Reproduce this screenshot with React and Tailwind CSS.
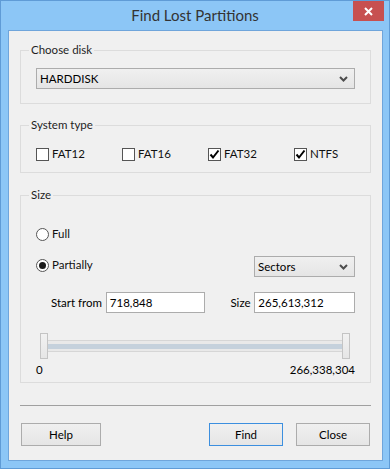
import { useState } from 'react';

const font = "font-['Lato',sans-serif]";

function Chevron() {
  return (
    <svg width="9" height="6" viewBox="0 0 9 6" className="shrink-0">
      <path d="M1 1 L4.5 4.5 L8 1" fill="none" stroke="#4d4d4d" strokeWidth="2" />
    </svg>
  );
}

function Select({ value, className }) {
  return (
    <div
      className={`flex h-[21px] items-center justify-between border border-[#acacac] bg-gradient-to-b from-[#f0f0f0] to-[#e5e5e5] pl-[3px] pr-[6px] text-[11.5px] text-black ${className}`}
    >
      <span>{value}</span>
      <Chevron />
    </div>
  );
}

function Checkbox({ label, checked, onChange, last }) {
  return (
    <label className={`flex h-[16px] cursor-default items-center ${last ? '' : 'w-[86px]'}`} onClick={onChange}>
      <span className="flex h-[13px] w-[13px] items-center justify-center border border-[#555] bg-white">
        {checked && (
          <svg width="11" height="11" viewBox="0 0 11 11">
            <path d="M1.5 5.5 L4 8.5 L9.5 1.5" fill="none" stroke="#000" strokeWidth="2" />
          </svg>
        )}
      </span>
      <span className="ml-[3px] text-[11.5px] text-[#111]">{label}</span>
    </label>
  );
}

function Radio({ label, checked, onClick }) {
  return (
    <div className="flex h-[16px] cursor-default items-center" onClick={onClick}>
      <span className="flex h-[13px] w-[13px] items-center justify-center rounded-full border border-[#555] bg-white">
        {checked && <span className="h-[7px] w-[7px] rounded-full bg-[#1a1a1a]" />}
      </span>
      <span className="ml-[3px] text-[11.5px] text-[#111]">{label}</span>
    </div>
  );
}

function GroupBox({ title, className, children }) {
  return (
    <fieldset className={`w-[351px] min-w-0 border border-[#dcdcdc] px-[15px] ${className}`}>
      <legend className="-ml-[7px] px-[2px] text-[11.5px] leading-[14px] text-[#1e1e1e]">{title}</legend>
      {children}
    </fieldset>
  );
}

function Button({ children, primary, width }) {
  return (
    <button
      className={`h-[23px] border bg-gradient-to-b from-[#f0f0f0] to-[#e5e5e5] text-[11.5px] leading-[21px] text-black ${width} ${
        primary ? 'border-[#3c8fdf]' : 'border-[#acacac]'
      }`}
    >
      {children}
    </button>
  );
}

function SliderThumb() {
  return <div className="h-[26px] w-[8px] shrink-0 border border-[#c4c4c4] bg-gradient-to-b from-[#f2f2f2] to-[#e6e6e6]" />;
}

export default function App() {
  const [types, setTypes] = useState({ FAT12: false, FAT16: false, FAT32: true, NTFS: true });
  const [mode, setMode] = useState('partial');

  const toggle = (k) => setTypes((prev) => ({ ...prev, [k]: !prev[k] }));

  return (
    <div className={`flex h-[469px] w-[390px] flex-col border border-[#5f9bd6] bg-[#8cc6f6] ${font}`}>
      {/* Title bar */}
      <div className="relative flex h-[29px] shrink-0 items-center justify-center">
        <span className="text-[15px] text-[#333]">Find Lost Partitions</span>
        <div className="absolute right-[5px] top-0 flex h-[20px] w-[31px] items-center justify-center bg-[#c75050]">
          <svg width="9" height="9" viewBox="0 0 9 9">
            <path d="M1 1 L8 8 M8 1 L1 8" stroke="#fff" strokeWidth="2" />
          </svg>
        </div>
      </div>

      {/* Client area */}
      <div className="mb-[7px] ml-[7px] mr-[6px] flex flex-1 flex-col border border-[#6fa5db] bg-[#f0f0f0] pl-[11px]">
        <GroupBox title="Choose disk" className="mt-[12px] pb-[14px]">
          <Select value="HARDDISK" className="mt-[11px] w-[319px]" />
        </GroupBox>

        <GroupBox title="System type" className="mt-[14px] pb-[10px]">
          <div className="mt-[14px] flex">
            {['FAT12', 'FAT16', 'FAT32', 'NTFS'].map((k, i) => (
              <Checkbox key={k} label={k} checked={types[k]} last={i === 3} onChange={() => toggle(k)} />
            ))}
          </div>
        </GroupBox>

        <GroupBox title="Size" className="mt-[15px] pb-[5px]">
          <div className="mt-[24px]">
            <Radio label="Full" checked={mode === 'full'} onClick={() => setMode('full')} />
          </div>
          <div className="mt-[14px] flex items-start justify-between">
            <div className="mt-[1px]">
              <Radio label="Partially" checked={mode === 'partial'} onClick={() => setMode('partial')} />
            </div>
            <Select value="Sectors" className="w-[101px]" />
          </div>
          <div className="mt-[15px] flex items-center text-[11.5px] text-black">
            <span className="ml-[15px] w-[55px]">Start from</span>
            <div className="flex h-[21px] w-[100px] items-center border border-[#acacac] bg-white pl-[3px]">718,848</div>
            <span className="ml-[25px] w-[24px]">Size</span>
            <div className="flex h-[21px] w-[101px] items-center border border-[#acacac] bg-white pl-[3px]">265,613,312</div>
          </div>
          <div className="mt-[20px] flex items-center pl-[4px] pr-[5px]">
            <SliderThumb />
            <div className="flex h-[12px] flex-1 items-center border-y border-[#d6d6d6] bg-[#e9e9e9]">
              <div className="h-[5px] w-full bg-[#c5d1dc]" />
            </div>
            <SliderThumb />
          </div>
          <div className="mt-[4px] flex justify-between text-[11.5px] leading-[14px] text-black">
            <span>0</span>
            <span>266,338,304</span>
          </div>
        </GroupBox>

        <div className="mt-[22px] h-px w-[351px] bg-[#a0a0a0]" />

        <div className="mt-[17px] flex w-[350px] pl-px">
          <Button width="w-[80px]">Help</Button>
          <div className="ml-auto flex gap-[13px]">
            <Button primary width="w-[74px]">Find</Button>
            <Button width="w-[74px]">Close</Button>
          </div>
        </div>
      </div>
    </div>
  );
}
